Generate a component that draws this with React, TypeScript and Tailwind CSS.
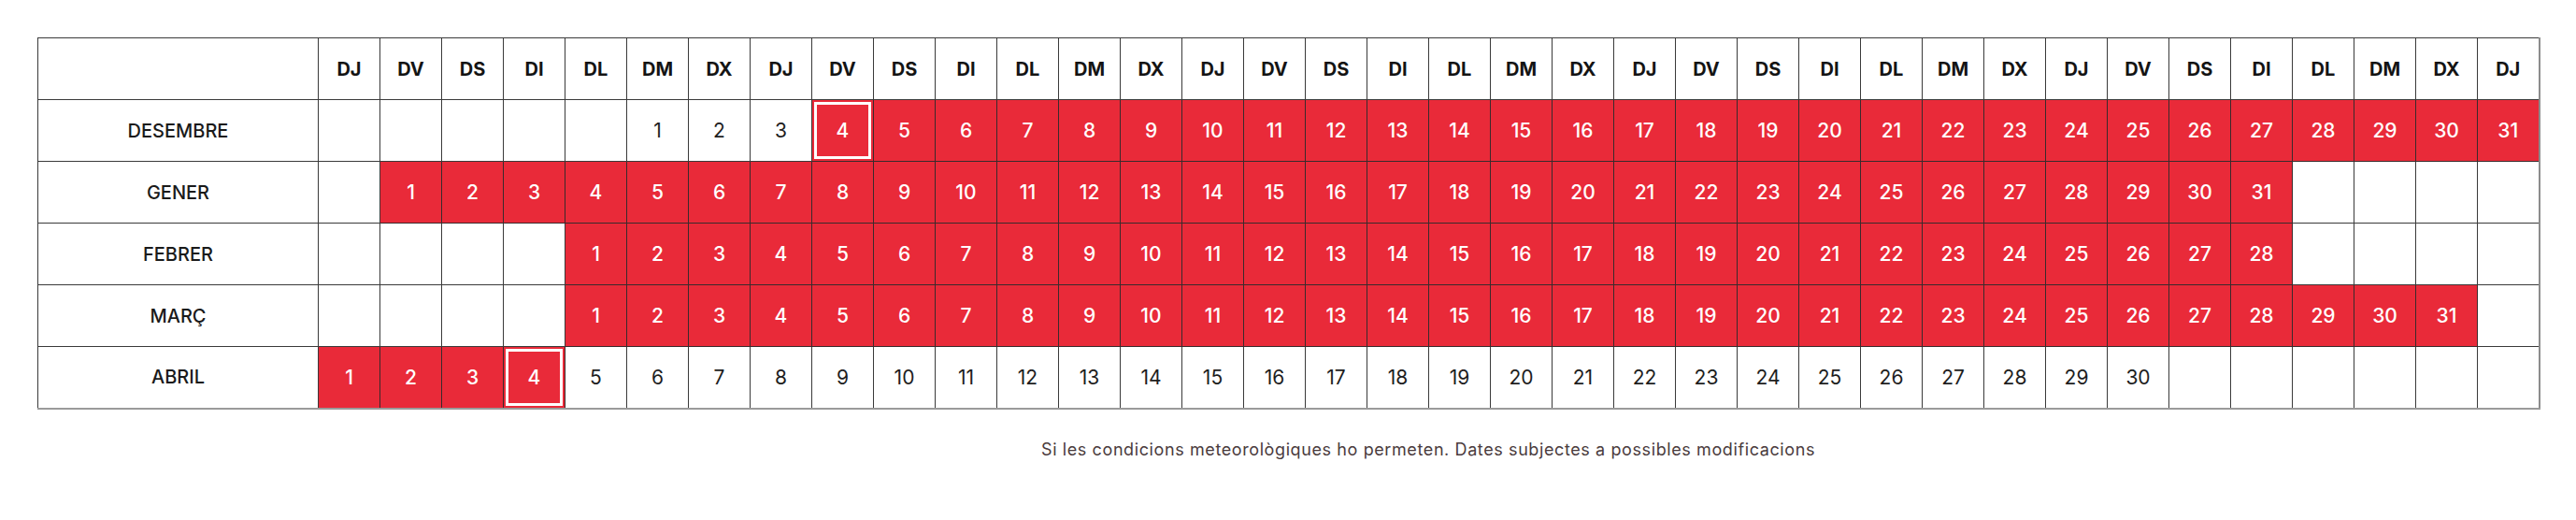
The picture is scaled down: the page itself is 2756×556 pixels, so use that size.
import React from "react";

const RED = "bg-[#e92a39]";
const heads = ["DJ", "DV", "DS", "DI", "DL", "DM", "DX"];
const header = Array.from({ length: 36 }, (_, i) => heads[i % 7]);

type Cell = { n?: number; kind: "blank" | "white" | "red" | "hl" };

function range(a: number, b: number, kind: Cell["kind"]): Cell[] {
  const r: Cell[] = [];
  for (let i = a; i <= b; i++) r.push({ n: i, kind });
  return r;
}
function blanks(k: number): Cell[] {
  return Array.from({ length: k }, () => ({ kind: "blank" as const }));
}

const rows: { name: string; cells: Cell[] }[] = [
  {
    name: "DESEMBRE",
    cells: [...blanks(5), ...range(1, 3, "white"), { n: 4, kind: "hl" }, ...range(5, 31, "red")],
  },
  { name: "GENER", cells: [...blanks(1), ...range(1, 31, "red"), ...blanks(4)] },
  { name: "FEBRER", cells: [...blanks(4), ...range(1, 28, "red"), ...blanks(4)] },
  { name: "MARÇ", cells: [...blanks(4), ...range(1, 31, "red"), ...blanks(1)] },
  {
    name: "ABRIL",
    cells: [...range(1, 3, "red"), { n: 4, kind: "hl" }, ...range(5, 30, "white"), ...blanks(6)],
  },
];

function DayCell({ c }: { c: Cell }) {
  if (c.kind === "hl") {
    return (
      <td className={`${RED} border border-[#3a2a2c] p-[2px] h-[66px]`}>
        <div className={`${RED} border-[3px] border-white h-full flex items-center justify-center text-white text-[21px] font-medium`}>
          {c.n}
        </div>
      </td>
    );
  }
  const cls =
    c.kind === "red"
      ? `${RED} text-white font-medium border-[#3a2a2c]`
      : "bg-white text-[#1e1e1e] font-normal border-[#3a3a3a]";
  return (
    <td className={`${cls} border h-[66px] text-center align-middle text-[21px]`}>
      {c.n ?? ""}
    </td>
  );
}

export default function App() {
  return (
    <div
      className="w-[2756px] h-[556px] bg-white"
      style={{ fontFamily: "Inter, 'Open Sans', sans-serif" }}
    >
      <div className="pt-[40px] pl-[40px]">
        <table className="table-fixed border-collapse w-[2676px] border-t border-t-[#6a4a4c] border-l border-l-[#6a4a4c] border-r-2 border-r-[#8c8c8c] border-b-2 border-b-[#9a9a9a]">
          <colgroup>
            <col className="w-[300px]" />
            {header.map((_, i) => (
              <col key={i} className="w-[66px]" />
            ))}
          </colgroup>
          <thead>
            <tr>
              <th className="border border-[#3a3a3a] h-[66px] bg-white"></th>
              {header.map((h, i) => (
                <th
                  key={i}
                  className="border border-[#3a3a3a] h-[66px] text-center align-middle text-[20px] font-bold text-[#141414]"
                >
                  {h}
                </th>
              ))}
            </tr>
          </thead>
          <tbody>
            {rows.map((r) => (
              <tr key={r.name}>
                <td className="border border-[#3a3a3a] h-[66px] text-center align-middle text-[20px] font-medium text-[#1a1a1a]">
                  {r.name}
                </td>
                {r.cells.map((c, i) => (
                  <DayCell key={i} c={c} />
                ))}
              </tr>
            ))}
          </tbody>
        </table>
        <div className="grid grid-cols-[300px_2376px] mt-[29px]">
          <div />
          <p className="text-center text-[18px] text-[#4a3b3d] tracking-[0.6px]">
            Si les condicions meteorològiques ho permeten. Dates subjectes a possibles modificacions
          </p>
        </div>
      </div>
    </div>
  );
}
